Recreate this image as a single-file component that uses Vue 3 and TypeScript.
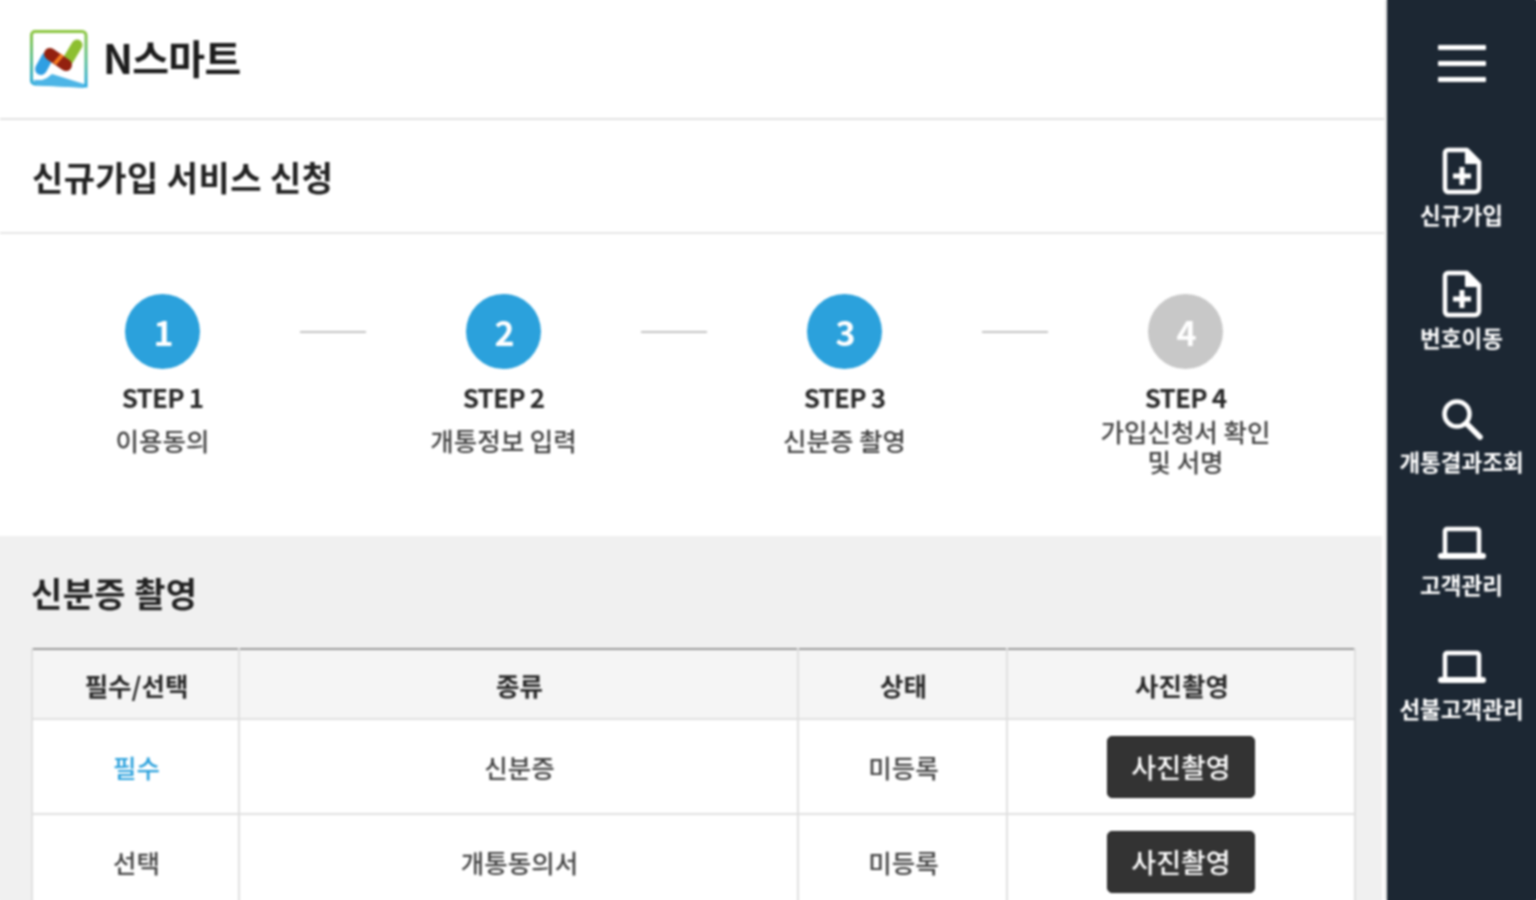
<script setup lang="ts">
interface Step {
  no: number;
  name: string;
  desc: string;
  done: boolean;
  wrap?: boolean;
}

interface DocRow {
  need: string;
  required: boolean;
  kind: string;
  state: string;
}

type NavIcon = "file" | "search" | "laptop";

const steps: Step[] = [
  { no: 1, name: "STEP 1", desc: "이용동의", done: true },
  { no: 2, name: "STEP 2", desc: "개통정보 입력", done: true },
  { no: 3, name: "STEP 3", desc: "신분증 촬영", done: true },
  { no: 4, name: "STEP 4", desc: "가입신청서 확인 및 서명", done: false, wrap: true },
];

const rows: DocRow[] = [
  { need: "필수", required: true, kind: "신분증", state: "미등록" },
  { need: "선택", required: false, kind: "개통동의서", state: "미등록" },
];

const navItems: { label: string; icon: NavIcon }[] = [
  { label: "신규가입", icon: "file" },
  { label: "번호이동", icon: "file" },
  { label: "개통결과조회", icon: "search" },
  { label: "고객관리", icon: "laptop" },
  { label: "선불고객관리", icon: "laptop" },
];
</script>

<template>
  <div class="page">
    <main class="main">
      <header class="top">
        <svg class="logo" viewBox="0 0 58 58" width="58" height="58">
          <defs>
            <linearGradient id="logoEdge" x1="0" y1="0" x2="0" y2="1">
              <stop offset="0" stop-color="#8cc63f" />
              <stop offset="0.5" stop-color="#5cbf8c" />
              <stop offset="1" stop-color="#29a9e0" />
            </linearGradient>
          </defs>
          <path d="M5 1.5H52A4 4 0 0 1 56 5.500V56L5 54A3.500 3.500 0 0 1 1.500 50.500V5A3.500 3.500 0 0 1 5 1.500Z" fill="#fff" stroke="url(#logoEdge)" stroke-width="3" />
          <path d="M3 50L12 50Q18 48 22 44L54 54L54 58L7 55Z" fill="#4db5e6" />
          <path d="M17 28L11 39" stroke="#2f9fe3" stroke-width="12" stroke-linecap="round" />
          <path d="M47 15L38 30" stroke="#8dbf30" stroke-width="11" stroke-linecap="round" />
          <path d="M20 24L36 35" stroke="#93210f" stroke-width="12" stroke-linecap="round" />
          <path d="M27 28L30 30.500" stroke="#f47a20" stroke-width="12" />
        </svg>
        <span class="brand">N스마트</span>
      </header>

      <div class="title-bar">
        <h1 class="title">신규가입 서비스 신청</h1>
      </div>

      <div class="steps">
        <template v-for="(step, i) in steps" :key="step.no">
          <div v-if="i > 0" class="link"></div>
          <div class="step">
            <span class="dot" :class="{ off: !step.done }">{{ step.no }}</span>
            <strong class="step-name">{{ step.name }}</strong>
            <span class="step-desc" :class="{ wrap: step.wrap }">{{ step.desc }}</span>
          </div>
        </template>
      </div>

      <section class="docs">
        <h2 class="docs-title">신분증 촬영</h2>
        <table class="grid">
          <colgroup>
            <col class="c1" />
            <col class="c2" />
            <col class="c3" />
            <col />
          </colgroup>
          <thead>
            <tr>
              <th>필수/선택</th>
              <th>종류</th>
              <th>상태</th>
              <th>사진촬영</th>
            </tr>
          </thead>
          <tbody>
            <tr v-for="row in rows" :key="row.kind">
              <td :class="{ must: row.required }">{{ row.need }}</td>
              <td>{{ row.kind }}</td>
              <td>{{ row.state }}</td>
              <td class="action"><button class="shot" type="button">사진촬영</button></td>
            </tr>
          </tbody>
        </table>
      </section>
    </main>

    <aside class="side">
      <button class="burger" type="button" aria-label="메뉴">
        <span></span>
        <span></span>
        <span></span>
      </button>
      <nav class="nav">
        <a v-for="item in navItems" :key="item.label" class="nav-item">
          <svg v-if="item.icon === 'file'" viewBox="0 0 40 48" width="40" height="48" fill="none" stroke="#fff" stroke-width="4.500" stroke-linejoin="round">
            <path d="M6 3H25L37 15V41A4 4 0 0 1 33 45H6A4 4 0 0 1 3 41V6A3 3 0 0 1 6 3Z" />
            <path d="M24 4V16H36Z" fill="#fff" stroke-width="2" />
            <path d="M20 20V38M11 29H29" stroke-width="5" />
          </svg>
          <svg v-else-if="item.icon === 'search'" class="lens" viewBox="0 0 42 42" width="42" height="42" fill="none" stroke="#fff" stroke-width="4.500" stroke-linecap="round">
            <circle cx="16" cy="16" r="12.500" />
            <path d="M25.500 25.500L39 39" stroke-width="5.500" />
          </svg>
          <svg v-else class="laptop" viewBox="0 0 48 36" width="48" height="36" fill="none" stroke="#fff" stroke-width="4.500">
            <path d="M7 28V6A2 2 0 0 1 9 4H39A2 2 0 0 1 41 6V28" />
            <path d="M3 31H45" stroke-width="6" stroke-linecap="round" />
          </svg>
          <span class="nav-label">{{ item.label }}</span>
        </a>
      </nav>
    </aside>
  </div>
</template>

<style>
html,
body {
  margin: 0;
  background: #fff;
  overflow: hidden;
}
</style>

<style scoped>
.page {
  display: flex;
  width: 1536px;
  height: 900px;
  font-family: "Noto Sans CJK KR", "Noto Sans", sans-serif;
  color: #333;
  filter: blur(0.8px);
}

.main {
  flex: 0 0 1386px;
  min-width: 0;
  box-sizing: border-box;
  border-right: 1px solid #d4d4d4;
  padding-right: 1px;
}

.top {
  display: flex;
  align-items: center;
  gap: 15px;
  height: 118px;
  padding-left: 30px;
  border-bottom: 2px solid #e2e2e2;
  box-sizing: content-box;
}

.logo {
  flex: none;
}

.brand {
  margin-top: -5px;
  font-size: 40px;
  font-weight: 700;
  color: #1c1c1c;
  letter-spacing: -0.7px;
}

.title-bar {
  display: flex;
  align-items: center;
  height: 112px;
  padding-left: 32px;
  border-bottom: 2px solid #e6e6e6;
}

.title {
  margin: 0;
  font-size: 34px;
  font-weight: 700;
  color: #222;
  letter-spacing: 0.4px;
}

.steps {
  display: flex;
  align-items: flex-start;
  height: 302px;
  box-sizing: border-box;
  padding: 60px 0 0 25px;
}

.step {
  display: flex;
  flex-direction: column;
  align-items: center;
  flex: 0 0 275px;
  text-align: center;
}

.link {
  flex: 0 0 66px;
  height: 2px;
  margin-top: 37px;
  background: #c4c4c4;
}

.dot {
  display: flex;
  align-items: center;
  justify-content: center;
  width: 75px;
  height: 75px;
  box-sizing: border-box;
  padding-left: 2px;
  border-radius: 50%;
  background: #2ba1dc;
  color: #fff;
  font-size: 34px;
  font-weight: 700;
}

.dot.off {
  background: #c8c8c8;
}

.step-name {
  margin-top: 13px;
  font-size: 26px;
  line-height: 30px;
  font-weight: 700;
  color: #2a2a2a;
  letter-spacing: -0.8px;
}

.step-desc {
  margin-top: 13px;
  width: 190px;
  font-size: 25.500px;
  line-height: 30px;
  font-weight: 500;
  color: #444;
}

.step-desc.wrap {
  margin-top: 4px;
}

.docs {
  height: 364px;
  box-sizing: border-box;
  margin-right: 2px;
  padding: 32px 0 0 31px;
  background: #f0f0f0;
  box-shadow: -4px 0 #f0f0f0, 0 4px #f0f0f0;
}

.docs-title {
  margin: 0 0 30px;
  font-size: 34px;
  line-height: 50px;
  font-weight: 700;
  color: #222;
  letter-spacing: 0.4px;
}

.grid {
  width: 1325px;
  table-layout: fixed;
  border-collapse: collapse;
  border-top: 2px solid #9a9a9a;
  background: #fff;
  font-size: 25.500px;
  text-align: center;
}

.c1 {
  width: 207px;
}

.c2 {
  width: 559px;
}

.c3 {
  width: 209px;
}

.grid th,
.grid td {
  border: 2px solid #e0e0e0;
  padding: 0 0 0 2px;
}

.grid thead tr {
  height: 70px;
}

.grid tbody tr {
  height: 95px;
}

.grid th {
  border-top: 0;
  background: #f5f5f5;
  font-weight: 700;
  color: #2a2a2a;
}

.grid td {
  font-weight: 500;
  color: #444;
}

.grid td.must {
  color: #2ba1dc;
}

.grid td.action {
  padding-left: 0;
}

.shot {
  display: block;
  width: 148px;
  height: 62px;
  margin: 0 auto;
  padding: 0;
  border: 1px solid #222;
  border-radius: 5px;
  background: #333;
  color: #fff;
  font-family: inherit;
  font-size: 27px;
  font-weight: 500;
}

.side {
  display: flex;
  flex-direction: column;
  align-items: center;
  flex: 0 0 149px;
  margin-left: 1px;
  background: #1c2733;
  box-shadow: 0 -4px #1c2733, 4px 0 #1c2733, 0 4px #1c2733;
}

.burger {
  display: flex;
  flex-direction: column;
  justify-content: space-between;
  width: 48px;
  height: 37px;
  margin-top: 45px;
  padding: 0;
  border: 0;
  background: none;
}

.burger span {
  display: block;
  height: 5px;
  border-radius: 1px;
  background: #fff;
}

.nav {
  display: flex;
  flex-direction: column;
  align-items: center;
  margin-top: 60px;
}

.nav-item {
  display: flex;
  flex-direction: column;
  align-items: center;
  justify-content: flex-end;
  width: 149px;
  height: 123.5px;
  box-sizing: border-box;
  padding-bottom: 36px;
}

.lens {
  margin-bottom: 2px;
}

.laptop {
  margin-bottom: 4px;
}

.nav-label {
  margin-top: 3px;
  font-size: 22.500px;
  line-height: 32px;
  font-weight: 700;
  color: #fff;
}
</style>
